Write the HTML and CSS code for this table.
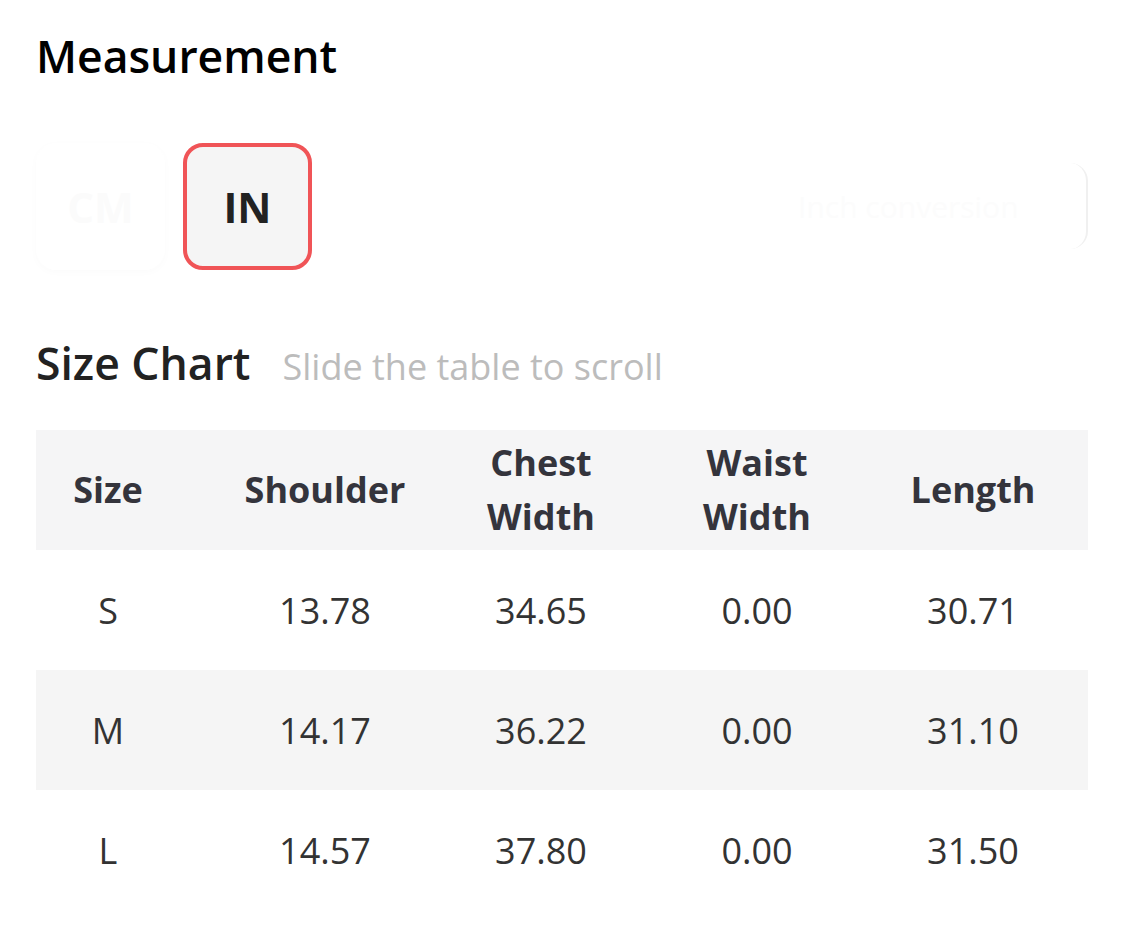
FILE: index.html
```html
<!DOCTYPE html>
<html lang="en">
<head>
<meta charset="utf-8">
<title>Measurement</title>
<link rel="stylesheet" href="styles.css">
</head>
<body>
<main class="page">
  <h1 class="title">Measurement</h1>
  <div class="units">
    <div class="unit unit-faded">CM</div>
    <div class="unit unit-active">IN</div>
    <div class="spacer"></div>
    <div class="ghost-box">Inch conversion</div>
  </div>
  <div class="chart-head">
    <h2 class="chart-title">Size Chart</h2>
    <span class="chart-hint">Slide the table to scroll</span>
  </div>
  <div class="table">
    <div class="row row-head">
      <div class="cell c1">Size</div>
      <div class="cell">Shoulder</div>
      <div class="cell">Chest<br>Width</div>
      <div class="cell">Waist<br>Width</div>
      <div class="cell c5">Length</div>
    </div>
    <div class="row">
      <div class="cell c1">S</div>
      <div class="cell">13.78</div>
      <div class="cell">34.65</div>
      <div class="cell">0.00</div>
      <div class="cell c5">30.71</div>
    </div>
    <div class="row row-alt">
      <div class="cell c1">M</div>
      <div class="cell">14.17</div>
      <div class="cell">36.22</div>
      <div class="cell">0.00</div>
      <div class="cell c5">31.10</div>
    </div>
    <div class="row">
      <div class="cell c1">L</div>
      <div class="cell">14.57</div>
      <div class="cell">37.80</div>
      <div class="cell">0.00</div>
      <div class="cell c5">31.50</div>
    </div>
  </div>
</main>
</body>
</html>
```
FILE: styles.css
```css
html, body {
  margin: 0;
  padding: 0;
  background: #ffffff;
}
body {
  font-family: "Open Sans", "Noto Sans", sans-serif;
  color: #222;
}
.page {
  padding: 0 37px 0 36px;
  width: 1052px;
}
.title {
  margin: 0;
  padding-top: 28px;
  font-size: 44.5px;
  font-weight: 600;
  line-height: 56px;
  color: #000;
}
.units {
  display: flex;
  align-items: center;
  gap: 18px;
  margin-top: 57px;
  height: 130px;
}
.unit {
  box-sizing: border-box;
  width: 129px;
  height: 127px;
  border-radius: 20px;
  display: flex;
  align-items: center;
  justify-content: center;
  font-size: 42px;
  font-weight: 700;
}
.unit-faded {
  color: #fbfbfb;
  background: #fff;
  box-shadow: 0 2px 8px rgba(0,0,0,0.02);
}
.unit-active {
  background: #f5f5f5;
  border: 4px solid #f05457;
  color: #222;
}
.spacer { flex: 1; }
.ghost-box {
  width: 330px;
  height: 86px;
  border-radius: 0 18px 18px 0;
  border-right: 2px solid #f0f0f0;
  display: flex;
  align-items: center;
  padding-left: 40px;
  box-sizing: border-box;
  color: #fcfcfc;
  font-size: 30px;
}
.chart-head {
  display: flex;
  align-items: baseline;
  gap: 32px;
  margin-top: 64px;
}
.chart-title {
  margin: 0;
  font-size: 44.5px;
  font-weight: 600;
  line-height: 56px;
  color: #222;
}
.chart-hint {
  font-size: 36px;
  color: #bcbcbc;
}
.table {
  margin-top: 39px;
  width: 1052px;
}
.row {
  display: grid;
  grid-template-columns: 181px 216px 216px 216px 223px;
  height: 120px;
  align-items: center;
  font-size: 36px;
  color: #333;
}
.row-head {
  background: #f5f5f6;
  font-weight: 700;
  color: #34343c;
  line-height: 54px;
}
.row-alt {
  background: #f5f5f5;
}
.cell {
  text-align: center;
}
.c1 {
  padding-right: 37px;
}
.c5 {
  padding-right: 7px;
}
```
